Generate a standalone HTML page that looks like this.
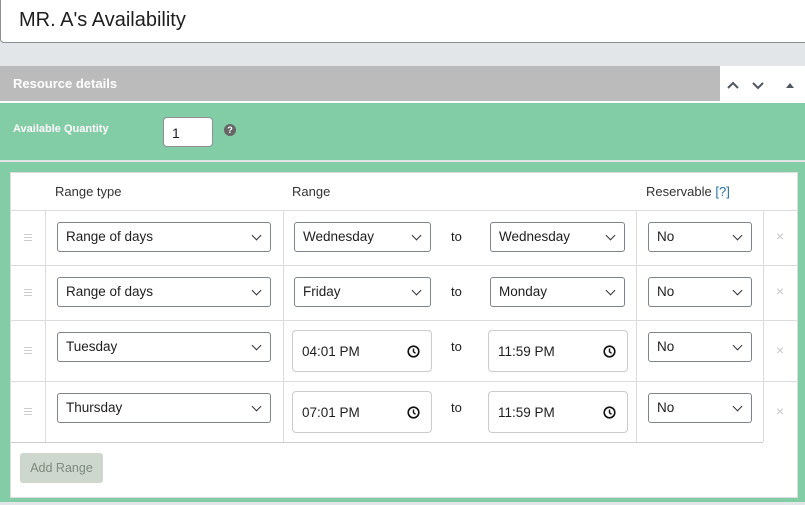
<!DOCTYPE html>
<html><head><style>
*{box-sizing:border-box;margin:0;padding:0}
body{width:805px;height:505px;background:#e3e6e9;font-family:"Liberation Sans",sans-serif;position:relative;overflow:hidden;color:#1e1e1e}
.a{position:absolute}
.sel{position:absolute;border:1px solid #7c838a;border-radius:3px;background:#fff;font-size:13.5px;padding:6px 0 0 8px;height:30px}
.sel:after{content:"";position:absolute;right:10px;top:9px;width:6px;height:6px;border-right:1.5px solid #333;border-bottom:1.5px solid #333;transform:rotate(45deg)}
.tm{position:absolute;border:1px solid #ccc;border-radius:4px;background:#fff;font-size:13.5px;padding:13px 0 0 9px;height:42px;width:140px}
.tm svg{position:absolute;right:11px;top:14px}
.to{position:absolute;font-size:13px}
.hl{position:absolute;height:1px;background:#dcdcdc}
.vl{position:absolute;width:1px;background:#dcdcdc}
.dr{position:absolute;left:24px;width:8px;height:7px;border-top:1px solid #ccc;border-bottom:1px solid #ccc}
.dr:after{content:"";position:absolute;left:0;right:0;top:2px;height:1px;background:#ccc}
.x{position:absolute;left:776px;color:#c8c8c8;font-size:14px}
</style></head><body>
<div class="a" style="left:0;top:0;width:805px;height:43px;background:#fff;border-left:1px solid #8c8f94;border-bottom:1px solid #8c8f94;border-radius:0 0 0 4px"></div>
<div class="a" style="left:19px;top:9px;font-size:20px">MR. A's Availability</div>
<div class="a" style="left:0;top:66px;width:720px;height:35px;background:#bbbbbb"></div>
<div class="a" style="left:720px;top:66px;width:85px;height:35px;background:#fff"></div>
<div class="a" style="left:13px;top:76px;font-size:13px;font-weight:bold;color:#fff">Resource details</div>
<svg class="a" style="left:726px;top:78px" width="70" height="14"><path d="M2 10l5-5 5 5" stroke="#50575e" stroke-width="2" fill="none"/><path d="M27 5l5 5 5-5" stroke="#50575e" stroke-width="2" fill="none"/><path d="M60 10l4-5 4 5z" fill="#50575e"/></svg>
<div class="a" style="left:0;top:101px;width:805px;height:2px;background:#fff"></div>
<div class="a" style="left:0;top:103px;width:805px;height:57px;background:#82cda5"></div>
<div class="a" style="left:0;top:162px;width:805px;height:340px;background:#82cda5"></div>
<div class="a" style="left:13px;top:123px;font-size:11px;font-weight:bold;color:#fff">Available Quantity</div>
<div class="a" style="left:163px;top:117px;width:50px;height:30px;background:#fff;border:1px solid #8c8f94;border-radius:4px;font-size:14px;padding:7px 0 0 8px">1</div>
<div class="a" style="left:224px;top:124px;width:12px;height:12px;border-radius:50%;background:#666;color:#fff;font-size:9px;font-weight:bold;text-align:center;line-height:12px">?</div>
<div class="a" style="left:10px;top:172px;width:788px;height:326px;background:#fff;border:1px solid #dcdcdc"></div>
<div class="a" style="left:55px;top:184px;font-size:13px;color:#333">Range type</div>
<div class="a" style="left:292px;top:184px;font-size:13px;color:#333">Range</div>
<div class="a" style="left:646px;top:184px;font-size:13px;color:#333">Reservable <span style="color:#2271b1">[?]</span></div>
<div class="hl" style="left:11px;top:210px;width:786px"></div>
<div class="hl" style="left:11px;top:265px;width:786px"></div>
<div class="hl" style="left:11px;top:320px;width:786px"></div>
<div class="hl" style="left:11px;top:381px;width:786px"></div>
<div class="hl" style="left:11px;top:442px;width:752px;background:#ccc"></div>
<div class="vl" style="left:45px;top:210px;height:232px"></div>
<div class="vl" style="left:283px;top:210px;height:232px"></div>
<div class="vl" style="left:636px;top:210px;height:232px"></div>
<div class="vl" style="left:763px;top:210px;height:232px"></div>

<div class="dr" style="top:234px"></div><div class="dr" style="top:289px"></div><div class="dr" style="top:347px"></div><div class="dr" style="top:408px"></div>

<div class="sel" style="left:57px;top:222px;width:214px">Range of days</div>
<div class="sel" style="left:294px;top:222px;width:137px">Wednesday</div>
<div class="to" style="left:451px;top:229px">to</div>
<div class="sel" style="left:490px;top:222px;width:135px">Wednesday</div>
<div class="sel" style="left:648px;top:222px;width:104px">No</div>
<div class="x" style="top:228px">×</div>

<div class="sel" style="left:57px;top:277px;width:214px">Range of days</div>
<div class="sel" style="left:294px;top:277px;width:137px">Friday</div>
<div class="to" style="left:451px;top:284px">to</div>
<div class="sel" style="left:490px;top:277px;width:135px">Monday</div>
<div class="sel" style="left:648px;top:277px;width:104px">No</div>
<div class="x" style="top:283px">×</div>

<div class="sel" style="left:57px;top:332px;width:214px">Tuesday</div>
<div class="tm" style="left:292px;top:330px">04:01 PM<svg width="13" height="13"><circle cx="6.5" cy="6.5" r="5.3" stroke="#111" stroke-width="1.6" fill="none"/><path d="M6.5 3.5v3.3l2 1.5" stroke="#111" stroke-width="1.4" fill="none"/></svg></div>
<div class="to" style="left:451px;top:339px">to</div>
<div class="tm" style="left:488px;top:330px">11:59 PM<svg width="13" height="13"><circle cx="6.5" cy="6.5" r="5.3" stroke="#111" stroke-width="1.6" fill="none"/><path d="M6.5 3.5v3.3l2 1.5" stroke="#111" stroke-width="1.4" fill="none"/></svg></div>
<div class="sel" style="left:648px;top:332px;width:104px">No</div>
<div class="x" style="top:342px">×</div>

<div class="sel" style="left:57px;top:393px;width:214px">Thursday</div>
<div class="tm" style="left:292px;top:391px">07:01 PM<svg width="13" height="13"><circle cx="6.5" cy="6.5" r="5.3" stroke="#111" stroke-width="1.6" fill="none"/><path d="M6.5 3.5v3.3l2 1.5" stroke="#111" stroke-width="1.4" fill="none"/></svg></div>
<div class="to" style="left:451px;top:400px">to</div>
<div class="tm" style="left:488px;top:391px">11:59 PM<svg width="13" height="13"><circle cx="6.5" cy="6.5" r="5.3" stroke="#111" stroke-width="1.6" fill="none"/><path d="M6.5 3.5v3.3l2 1.5" stroke="#111" stroke-width="1.4" fill="none"/></svg></div>
<div class="sel" style="left:648px;top:393px;width:104px">No</div>
<div class="x" style="top:403px">×</div>

<div class="a" style="left:20px;top:453px;width:83px;height:30px;background:#ced7cd;border-radius:3px;color:#7d8a7d;font-size:12.5px;text-align:center;line-height:30px">Add Range</div>
</body></html>
